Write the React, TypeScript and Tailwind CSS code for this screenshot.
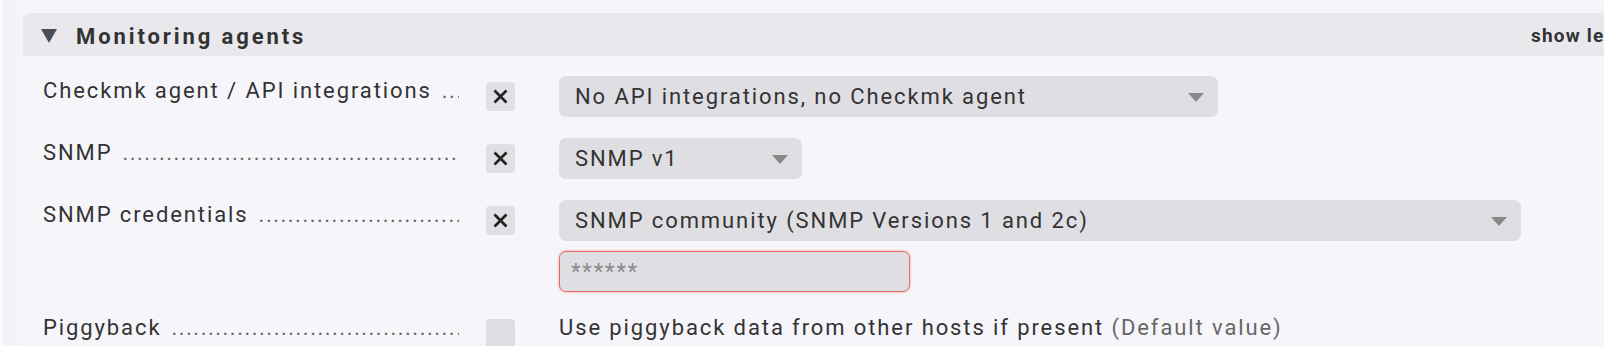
import React from "react";

const DOTS = ".".repeat(120);

function XBox() {
  return (
    <div className="mt-[6px] ml-[27px] flex h-[29px] w-[29px] shrink-0 items-center justify-center rounded-[4px] bg-[#e0dfe4]">
      <svg width="15" height="15" viewBox="0 0 15 15">
        <path d="M1.5 1.5 L13.5 13.5 M13.5 1.5 L1.5 13.5" stroke="#222" strokeWidth="2.7" />
      </svg>
    </div>
  );
}

function EmptyBox() {
  return <div className="mt-[6px] ml-[27px] h-[29px] w-[29px] shrink-0 rounded-[4px] bg-[#dedde2]" />;
}

function Label({ text }: { text: string }) {
  return (
    <div className="mt-[1px] flex w-[416px] shrink-0 overflow-hidden whitespace-nowrap text-[22px] leading-[28px] tracking-[1.9px] text-[#333]">
      <span className="shrink-0">{text}</span>
      <span className="ml-[10px] overflow-hidden tracking-[1.5px] text-[#666]">{DOTS}</span>
    </div>
  );
}

function Select({ value, width }: { value: string; width: string }) {
  return (
    <div className={`flex h-[41px] items-center justify-between rounded-[7px] bg-[#dfdee3] pl-[16px] pr-[14px] ${width}`}>
      <span className="whitespace-nowrap text-[22px] leading-[28px] tracking-[1.9px] text-[#333]">{value}</span>
      <svg width="16" height="9" viewBox="0 0 16 9" className="mt-[2px] shrink-0">
        <polygon points="0,0 16,0 8,9" fill="#888" />
      </svg>
    </div>
  );
}

export default function App() {
  return (
    <div className="flex h-[346px] w-[1604px] overflow-hidden bg-[#f6f6fa] font-['Roboto',sans-serif]">
      <div className="w-[3px] shrink-0 bg-[#fbfbfe]" />
      <div className="w-[20px] shrink-0 bg-[#f3f3f8]" />
      <div className="pt-[13px]">
        <div className="w-[1640px]">
          {/* section header */}
          <div className="flex h-[43px] items-center rounded-tl-[6px] bg-[#e8e8ed] pt-[3px]">
            <div className="flex w-[1508px] shrink-0 items-center pl-[18px]">
              <svg width="16" height="14" viewBox="0 0 16 14">
                <polygon points="0,0 16,0 8,14" fill="#4a5059" />
              </svg>
              <span className="ml-[19px] whitespace-nowrap text-[22px] font-bold tracking-[2.9px] text-[#333]">
                Monitoring agents
              </span>
            </div>
            <span className="whitespace-nowrap text-[19px] font-bold tracking-[1.2px] text-[#333]">show less</span>
          </div>

          {/* section body */}
          <div className="flex flex-col gap-[21px] pt-[20px] pl-[20px]">
            <div className="flex items-start">
              <Label text="Checkmk agent / API integrations" />
              <XBox />
              <div className="ml-[44px]">
                <Select value="No API integrations, no Checkmk agent" width="w-[659px]" />
              </div>
            </div>

            <div className="flex items-start">
              <Label text="SNMP" />
              <XBox />
              <div className="ml-[44px]">
                <Select value="SNMP v1" width="w-[243px]" />
              </div>
            </div>

            <div className="flex items-start">
              <Label text="SNMP credentials" />
              <XBox />
              <div className="ml-[44px] flex flex-col gap-[10px]">
                <Select value="SNMP community (SNMP Versions 1 and 2c)" width="w-[962px]" />
                <div className="flex h-[41px] w-[351px] items-center rounded-[7px] border border-[#e46a6a] bg-[#dfdee3] pl-[11px] shadow-[0_0_3px_#f2a0a0]">
                  <span className="text-[22px] leading-[28px] tracking-[1.9px] text-[#8a8a8a]">******</span>
                </div>
              </div>
            </div>

            <div className="flex items-start">
              <Label text="Piggyback" />
              <EmptyBox />
              <div className="mt-[1px] ml-[44px] whitespace-nowrap text-[22px] leading-[28px] tracking-[1.9px] text-[#333]">
                Use piggyback data from other hosts if present <span className="text-[#666]">(Default value)</span>
              </div>
            </div>
          </div>
        </div>
      </div>
    </div>
  );
}
